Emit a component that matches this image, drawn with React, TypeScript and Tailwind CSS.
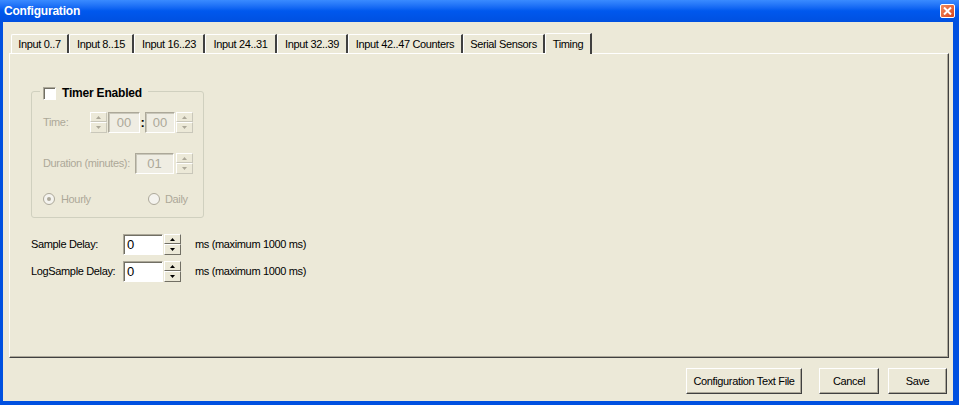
import React from 'react'

const tabs = [
  { label: 'Input 0..7', w: 'w-[58px]' },
  { label: 'Input 8..15', w: 'w-[65px]' },
  { label: 'Input 16..23', w: 'w-[71px]' },
  { label: 'Input 24..31', w: 'w-[72px]' },
  { label: 'Input 32..39', w: 'w-[71px]' },
  { label: 'Input 42..47 Counters', w: 'w-[115px]' },
  { label: 'Serial Sensors', w: 'w-[82px]' },
]

function Arrow({ up, disabled }: { up?: boolean; disabled?: boolean }) {
  return (
    <svg width="5" height="3" viewBox="0 0 5 3">
      <path d={up ? 'M2.5 0 L5 3 L0 3 Z' : 'M0 0 L5 0 L2.5 3 Z'} fill={disabled ? '#aca899' : '#000'} />
    </svg>
  )
}

function Spinner({ disabled }: { disabled?: boolean }) {
  const btn = disabled
    ? 'border-t-white border-l-white border-r-[#c9c7ba] border-b-[#c9c7ba]'
    : 'border-t-white border-l-white border-r-[#716f64] border-b-[#716f64]'
  return (
    <div className="flex flex-col w-[17px] h-[21px]">
      <div className={`h-[10px] flex items-center justify-center border bg-[#ece9d8] ${btn}`}>
        <Arrow up disabled={disabled} />
      </div>
      <div className={`h-[11px] flex items-center justify-center border bg-[#ece9d8] ${btn}`}>
        <Arrow disabled={disabled} />
      </div>
    </div>
  )
}

function Box({ value, w, disabled }: { value: string; w: string; disabled?: boolean }) {
  if (disabled) {
    return (
      <div className={`${w} h-[21px] flex items-center justify-center border border-t-[#aca899] border-l-[#aca899] border-r-white border-b-white shadow-[inset_1px_1px_0_#c9c7ba] bg-[#efede3] text-[13px] tracking-normal text-[#aca899]`}>
        {value}
      </div>
    )
  }
  return (
    <div className={`${w} h-[21px] flex items-center pl-[3px] border border-t-[#aca899] border-l-[#aca899] border-r-white border-b-white shadow-[inset_1px_1px_0_#716f64] bg-white text-[13px] text-black`}>
      {value}
    </div>
  )
}

function Radio({ checked }: { checked?: boolean }) {
  return (
    <div className="w-[12px] h-[12px] rounded-full border border-[#aca899] bg-[#f4f3ee] flex items-center justify-center">
      {checked && <div className="w-[4px] h-[4px] rounded-full bg-[#aca899]" />}
    </div>
  )
}

function Button({ label, w }: { label: string; w: string }) {
  return (
    <div className={`${w} h-[26px] border border-t-white border-l-white border-r-[#404040] border-b-[#404040] shadow-[inset_-1px_-1px_0_#aca899] bg-[#ece9d8] flex items-center justify-center whitespace-nowrap text-[11px] text-black`}>
      {label}
    </div>
  )
}

export default function App() {
  return (
    <div className="w-[959px] h-[405px] flex flex-col bg-[#0050e0] font-['Liberation_Sans',Arial,sans-serif] text-[11px] tracking-[-0.35px] text-black select-none whitespace-nowrap">
      {/* title bar */}
      <div className="h-[22px] flex items-center justify-between pl-[4px] pr-[4px] bg-gradient-to-b from-[#3a8bff] via-[#0058ee] to-[#0050e0]">
        <span className="text-white font-bold text-[12px] tracking-[-0.2px]">Configuration</span>
        <div className="w-[15px] h-[14px] rounded-[2px] border border-white bg-gradient-to-br from-[#f08a5c] to-[#d8431c] flex items-center justify-center">
          <svg width="9" height="8" viewBox="0 0 9 8">
            <path d="M1 0.5 L8 7.5 M8 0.5 L1 7.5" stroke="#fff" strokeWidth="2" />
          </svg>
        </div>
      </div>

      {/* body */}
      <div className="flex-1 ml-[3px] mr-[6px] mb-[4px] bg-[#ece9d8] flex flex-col">
        {/* tabs */}
        <div className="mt-[10px] pl-[8px] flex items-end h-[21px]">
          {tabs.map((t) => (
            <div
              key={t.label}
              className={`${t.w} h-[19px] flex items-center justify-center border-t border-l border-t-white border-l-white border-r-2 border-r-[#404040] rounded-tl-[2px] text-[11px]`}
            >
              {t.label}
            </div>
          ))}
          <div className="relative z-10 w-[47px] h-[21px] -mb-px flex items-center justify-center border-t border-l border-t-white border-l-white border-r-2 border-r-[#404040] rounded-tl-[2px] bg-[#ece9d8] text-[11px]">
            Timing
          </div>
        </div>

        {/* panel */}
        <div className="ml-[6px] w-[940px] h-[305px] border-t border-l border-t-white border-l-white border-r border-b border-r-[#404040] border-b-[#404040]">
          <div className="h-full border-r border-b border-r-[#aca899] border-b-[#aca899] flex flex-col">
            {/* group box */}
            <div className="relative ml-[21px] mt-[37px] w-[173px] h-[127px] border border-[#d0d0bf] rounded-[3px]">
              <div className="absolute -top-[8px] left-[8px] flex items-center gap-[6px] bg-[#ece9d8] px-[3px]">
                <div className="w-[13px] h-[13px] border border-t-[#aca899] border-l-[#aca899] border-r-white border-b-white shadow-[inset_1px_1px_0_#716f64] bg-white" />
                <span className="font-bold text-[12px] tracking-[-0.2px] pr-[3px]">Timer Enabled</span>
              </div>

              <div className="flex flex-col pl-[11px] pt-[20px] text-[#aca899]">
                <div className="flex items-center h-[21px]">
                  <span className="w-[47px]">Time:</span>
                  <Spinner disabled />
                  <div className="ml-[1px]">
                    <Box value="00" w="w-[32px]" disabled />
                  </div>
                  <span className="w-[5px] text-center font-bold text-[13px] text-black leading-none">:</span>
                  <Box value="00" w="w-[30px]" disabled />
                  <div className="ml-[1px]">
                    <Spinner disabled />
                  </div>
                </div>

                <div className="flex items-center h-[21px] mt-[20px]">
                  <span className="w-[92px]">Duration (minutes):</span>
                  <Box value="01" w="w-[39px]" disabled />
                  <div className="ml-[2px]">
                    <Spinner disabled />
                  </div>
                </div>

                <div className="flex items-center h-[14px] mt-[18px]">
                  <div className="w-[105px] flex items-center gap-[6px]">
                    <Radio checked />
                    <span>Hourly</span>
                  </div>
                  <div className="flex items-center gap-[5px]">
                    <Radio />
                    <span>Daily</span>
                  </div>
                </div>
              </div>
            </div>

            {/* delays */}
            <div className="ml-[21px] mt-[16px] flex flex-col gap-[6px]">
              {['Sample Delay:', 'LogSample Delay:'].map((l) => (
                <div key={l} className="flex items-center h-[21px]">
                  <span className="w-[92px]">{l}</span>
                  <Box value="0" w="w-[40px]" />
                  <div className="ml-[1px]">
                    <Spinner />
                  </div>
                  <span className="ml-[14px]">ms (maximum 1000 ms)</span>
                </div>
              ))}
            </div>
          </div>
        </div>

        {/* buttons */}
        <div className="mt-[10px] flex justify-end pr-[6px]">
          <Button label="Configuration Text File" w="w-[116px]" />
          <div className="ml-[17px]">
            <Button label="Cancel" w="w-[60px]" />
          </div>
          <div className="ml-[9px]">
            <Button label="Save" w="w-[59px]" />
          </div>
        </div>
      </div>
    </div>
  )
}
